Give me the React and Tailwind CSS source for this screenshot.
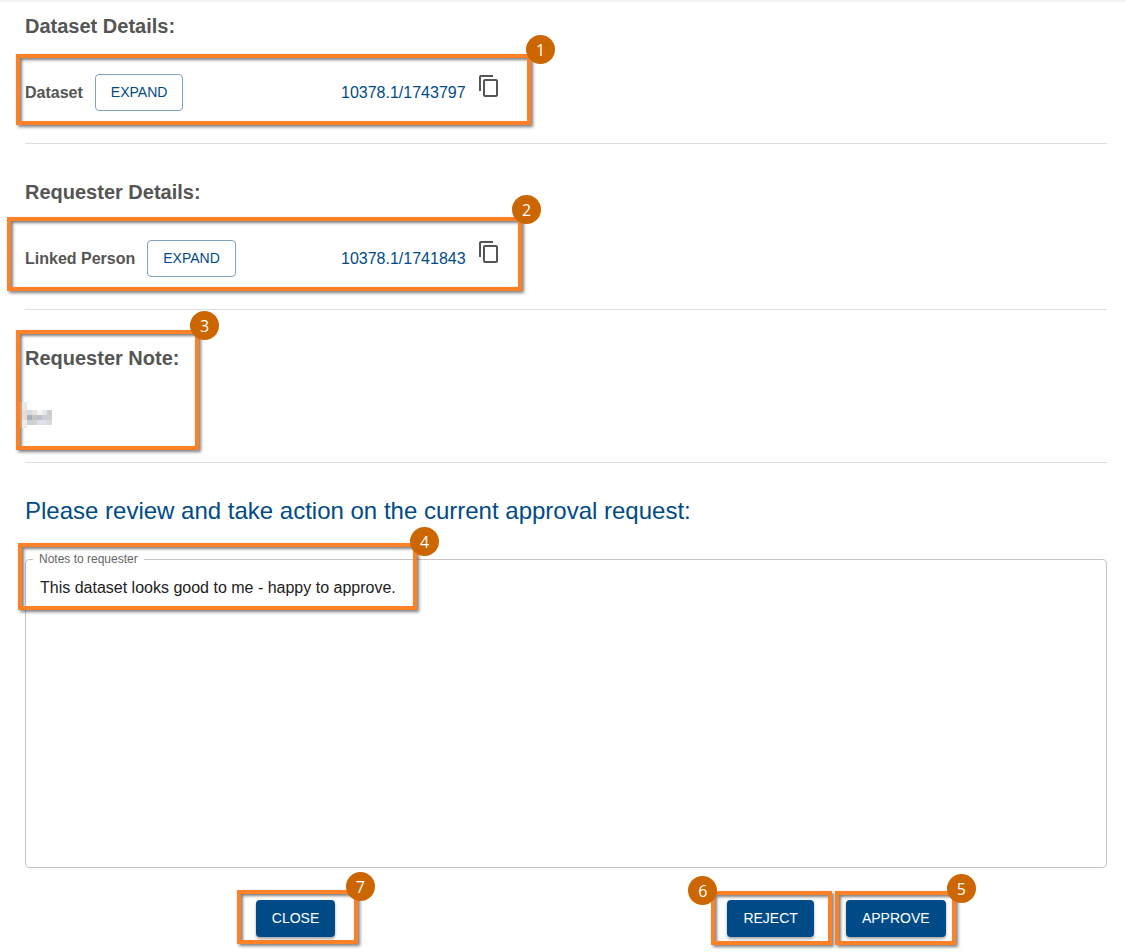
const COPY_PATH =
  "M16 1H4c-1.1 0-2 .9-2 2v14h2V3h12V1zm3 4H8c-1.1 0-2 .9-2 2v14c0 1.1.9 2 2 2h11c1.1 0 2-.9 2-2V7c0-1.1-.9-2-2-2zm0 16H8V7h11v14z";

function Callout({ number, box, badge }) {
  return (
    <div
      className={`pointer-events-none absolute z-10 border-4 border-[#ff8127] shadow-[2px_2px_3px_rgba(0,0,0,0.5),inset_2px_2px_3px_rgba(0,0,0,0.5)] ${box}`}
    >
      <span
        className={`absolute flex size-[29px] items-center justify-center rounded-full bg-[#cc6600] font-['Open_Sans',sans-serif] text-base leading-none text-white ${badge}`}
      >
        {number}
      </span>
    </div>
  );
}

function SectionTitle({ children }) {
  return <h2 className="text-xl leading-8 font-bold text-[#555]">{children}</h2>;
}

function RecordRow({ label, handle, children }) {
  return (
    <div className="relative mt-8 flex h-[37px]">
      <div className="flex w-[316px] items-center gap-3">
        <span className="text-base font-bold text-[#555]">{label}</span>
        <button
          type="button"
          className="h-full rounded border border-[#7fa3c2] px-[15px] pb-px text-sm text-[#004b87]"
        >
          EXPAND
        </button>
      </div>
      <div className="flex gap-[11px]">
        <a href="#" className="self-center text-base text-[#004b87]">
          {handle}
        </a>
        <button type="button" aria-label="Copy handle" className="self-start">
          <svg viewBox="0 0 24 24" className="size-6 fill-[#555]">
            <path d={COPY_PATH} />
          </svg>
        </button>
      </div>
      {children}
    </div>
  );
}

function ActionButton({ children }) {
  return (
    <button
      type="button"
      className="h-[37px] rounded bg-[#004b87] px-4 pb-px text-sm text-white shadow-[0_2px_3px_rgba(0,0,0,0.35)]"
    >
      {children}
    </button>
  );
}

export default function App() {
  return (
    <main className="border-t-2 border-[#f4f4f4] bg-white pt-2 pr-[19px] pb-3 pl-[25px] font-['Liberation_Sans',Arial,sans-serif]">
      <section className="border-b border-[#dedede] pb-8">
        <SectionTitle>Dataset Details:</SectionTitle>
        <RecordRow label="Dataset" handle="10378.1/1743797">
          <Callout
            number="1"
            box="-left-[9px] -top-5 h-[71px] w-[515px]"
            badge="-right-7 -top-[23px]"
          />
        </RecordRow>
      </section>

      <section className="border-b border-[#dedede] py-8">
        <SectionTitle>Requester Details:</SectionTitle>
        <RecordRow label="Linked Person" handle="10378.1/1741843">
          <Callout
            number="2"
            box="-left-[18px] -top-[23px] h-[74px] w-[515px]"
            badge="-right-[23px] -top-[26px]"
          />
        </RecordRow>
      </section>

      <section className="relative border-b border-[#dedede] py-8">
        <SectionTitle>Requester Note:</SectionTitle>
        <Callout
          number="3"
          box="-left-[9px] top-5 h-[120px] w-[183px]"
          badge="-right-6 -top-[23px]"
        />
        <div className="relative z-20 mt-8 -ml-[5px] flex h-6 items-start">
          <svg viewBox="0 0 35 26" className="-mt-1 h-[26px] w-[35px]" shapeRendering="crispEdges">
            <rect x="0" y="0" width="2" height="26" fill="#c9a183" />
            <rect x="2" y="0" width="5" height="8" fill="#e8e8e8" />
            <rect x="2" y="8" width="5" height="10" fill="#e8dcd4" />
            <rect x="2" y="18" width="5" height="8" fill="#ececec" />
            <rect x="7" y="8" width="5" height="5" fill="#d3d9e2" />
            <rect x="12" y="8" width="5" height="5" fill="#e4e2e0" />
            <rect x="17" y="8" width="5" height="5" fill="#f4f4f4" />
            <rect x="22" y="8" width="5" height="5" fill="#e4eaec" />
            <rect x="27" y="8" width="5" height="5" fill="#cccccc" />
            <rect x="7" y="13" width="5" height="5" fill="#adadb5" />
            <rect x="12" y="13" width="5" height="5" fill="#c4c4c4" />
            <rect x="17" y="13" width="5" height="5" fill="#bcc0cc" />
            <rect x="22" y="13" width="5" height="5" fill="#c9cdd6" />
            <rect x="27" y="13" width="5" height="5" fill="#cfcfcf" />
            <rect x="7" y="18" width="10" height="5" fill="#cfcfd1" />
            <rect x="17" y="18" width="10" height="5" fill="#dfe1e6" />
            <rect x="27" y="18" width="5" height="5" fill="#dadada" />
          </svg>
        </div>
      </section>

      <section className="pt-8">
        <h1 className="text-2xl leading-8 text-[#004b87]">
          Please review and take action on the current approval request:
        </h1>
        <div className="relative mt-8">
          <label
            htmlFor="notes"
            className="absolute -top-2 left-2 bg-white px-[6px] text-xs leading-4 text-[#666]"
          >
            Notes to requester
          </label>
          <textarea
            id="notes"
            defaultValue="This dataset looks good to me - happy to approve."
            className="block h-[309px] w-full resize-none rounded border border-[#c4c4c4] px-[14px] py-4 text-base leading-6 text-[#212121]"
          />
          <Callout
            number="4"
            box="-left-[7px] -top-4 h-[67px] w-[399px]"
            badge="-right-[26px] -top-5"
          />
        </div>
        <div className="mt-8 grid grid-cols-2">
          <div className="flex justify-center">
            <div className="relative">
              <ActionButton>CLOSE</ActionButton>
              <Callout
                number="7"
                box="-left-[19px] -top-[10px] h-[54px] w-[121px]"
                badge="-right-[21px] -top-[22px]"
              />
            </div>
          </div>
          <div className="flex justify-center gap-8">
            <div className="relative">
              <ActionButton>REJECT</ActionButton>
              <Callout
                number="6"
                box="-left-4 -top-[9px] h-[54px] w-[121px]"
                badge="-left-[27px] -top-[19px]"
              />
            </div>
            <div className="relative">
              <ActionButton>APPROVE</ActionButton>
              <Callout
                number="5"
                box="-left-[11px] -top-[9px] h-[54px] w-[121px]"
                badge="-right-6 -top-[21px]"
              />
            </div>
          </div>
        </div>
      </section>
    </main>
  );
}
